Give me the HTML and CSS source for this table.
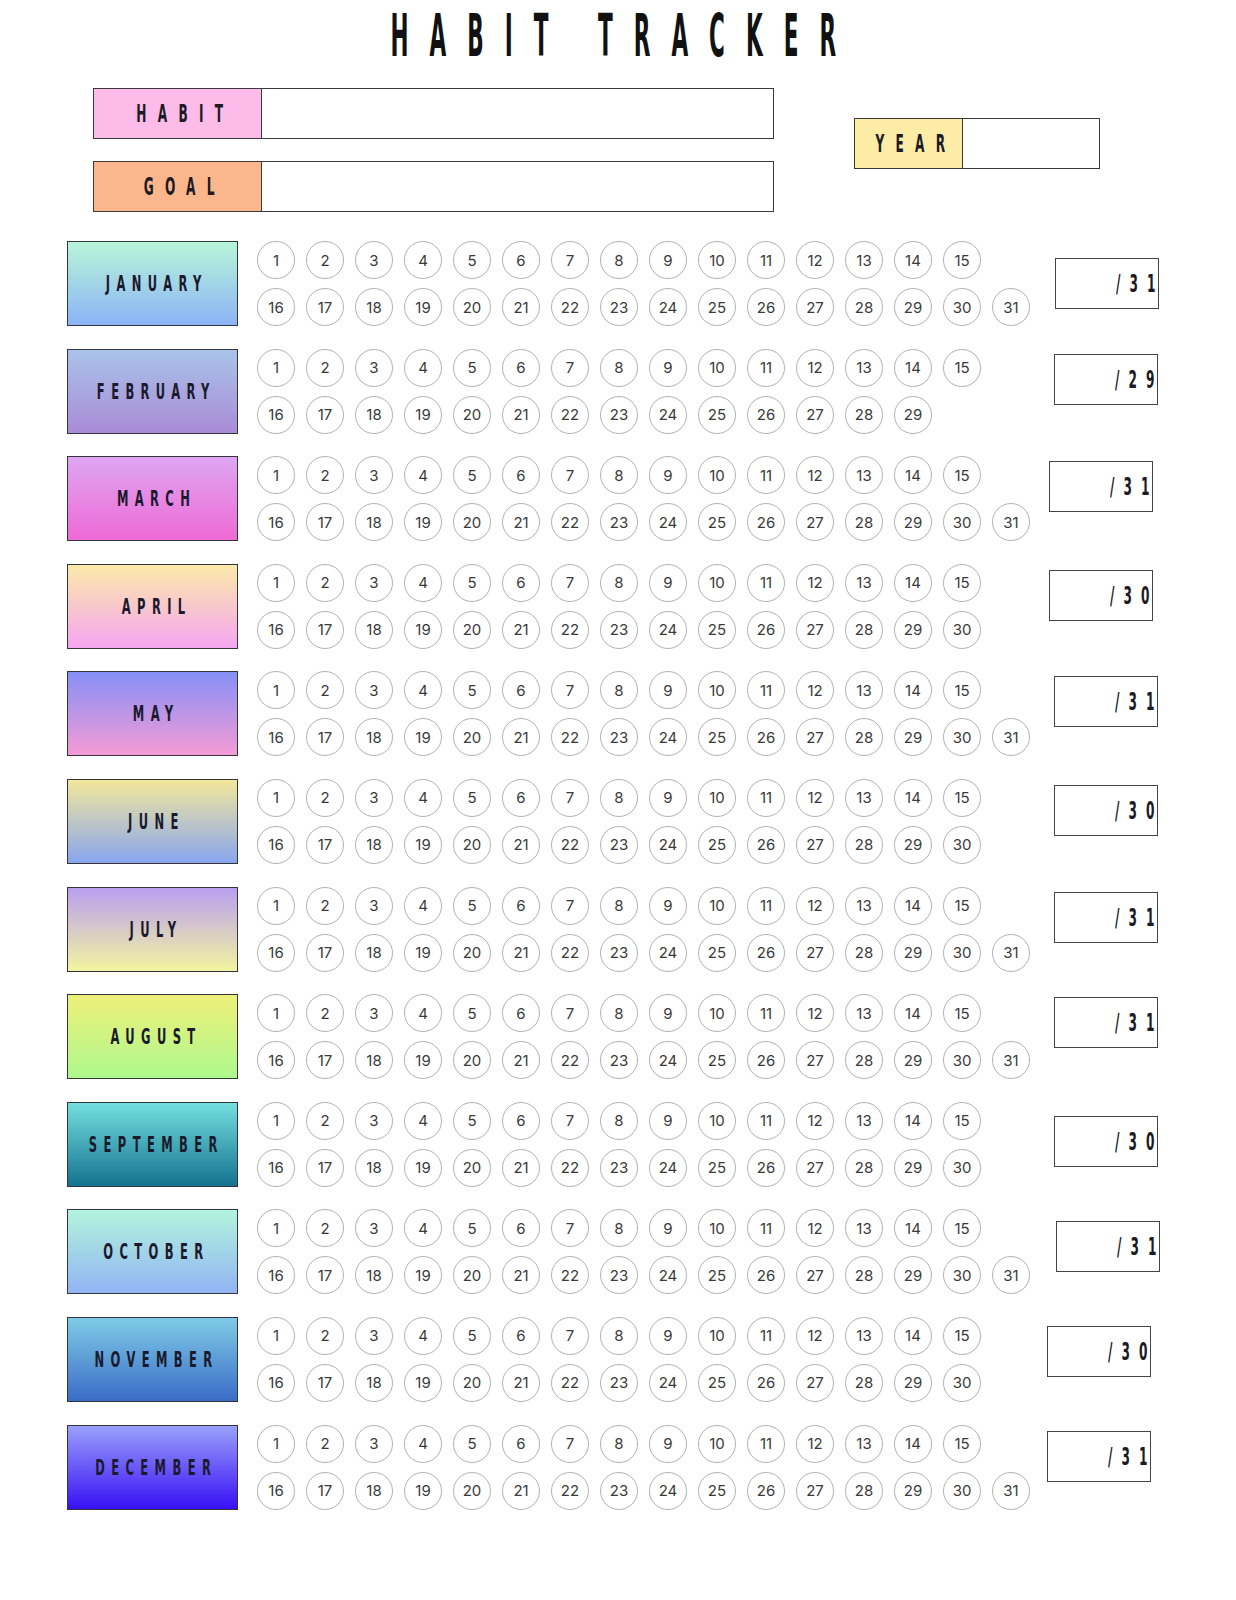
FILE: index.html
```html
<!DOCTYPE html>
<html lang="en">
<head>
<meta charset="utf-8">
<title>Habit Tracker</title>
<link rel="stylesheet" href="styles.css">
</head>
<body>
<div class="page">
  <h1 class="title"><span class="cond">HABIT TRACKER</span></h1>

  <div class="top">
    <div class="fields">
      <div class="field">
        <div class="field-label habit"><span class="cond lbl">HABIT</span></div>
        <div class="field-input"></div>
      </div>
      <div class="field">
        <div class="field-label goal"><span class="cond lbl">GOAL</span></div>
        <div class="field-input"></div>
      </div>
    </div>
    <div class="field year">
      <div class="field-label yearlbl"><span class="cond lbl">YEAR</span></div>
      <div class="field-input"></div>
    </div>
  </div>

  <div class="months" id="months"></div>
</div>
<script src="script.js"></script>
</body>
</html>
```

FILE: script.js
```js
(function () {
  var months = [
    ["JANUARY", 31, "jan"], ["FEBRUARY", 29, "feb"], ["MARCH", 31, "mar"],
    ["APRIL", 30, "apr"], ["MAY", 31, "may"], ["JUNE", 30, "jun"],
    ["JULY", 31, "jul"], ["AUGUST", 31, "aug"], ["SEPTEMBER", 30, "sep"],
    ["OCTOBER", 31, "oct"], ["NOVEMBER", 30, "nov"], ["DECEMBER", 31, "dec"]
  ];
  var root = document.getElementById("months");
  months.forEach(function (m) {
    var row = document.createElement("div");
    row.className = "month " + m[2];
    var html = '<div class="mlabel"><span class="cond mtxt">' + m[0] + '</span></div>';
    html += '<div class="days"><div class="drow">';
    for (var d = 1; d <= 15; d++) html += '<span class="day">' + d + '</span>';
    html += '</div><div class="drow">';
    for (var d2 = 16; d2 <= m[1]; d2++) html += '<span class="day">' + d2 + '</span>';
    html += '</div></div>';
    html += '<div class="score"><span class="cond stxt">/' + m[1] + '</span></div>';
    row.innerHTML = html;
    root.appendChild(row);
  });
})();
```

FILE: styles.css
```css
* { box-sizing: border-box; }

body {
  margin: 0;
  background: #ffffff;
  font-family: Inter, "Liberation Sans", sans-serif;
  color: #222;
}

.page {
  width: 1236px;
  padding: 0 0 60px 67px;
}

.cond {
  display: inline-block;
  font-family: "Liberation Sans Narrow", "DejaVu Sans Condensed", "Liberation Sans", sans-serif;
  font-stretch: condensed;
  transform-origin: center center;
  white-space: pre;
}

/* Title */
.title {
  margin: 0 0 0 -67px;
  padding-top: 16px;
  height: 88px;
  text-align: center;
  font-weight: normal;
}
.title .cond {
  font-size: 40px;
  line-height: 40px;
  font-weight: 700;
  letter-spacing: 35px;
  margin-right: -12px;
  color: #111;
  transform: scale(0.6, 1.45);
}

/* Top fields */
.top {
  display: flex;
  align-items: flex-start;
}
.fields {
  margin-left: 26px;
  display: flex;
  flex-direction: column;
  gap: 22px;
}
.field {
  display: flex;
  height: 51px;
  border: 1.5px solid #3a3a3a;
}
.fields .field { width: 681px; }
.field-label {
  width: 168px;
  border-right: 1.5px solid #3a3a3a;
  display: flex;
  align-items: center;
  justify-content: center;
}
.field-input { flex: 1; background: #fff; }
.habit { background: #fcbbe8; }
.goal { background: #fbb68b; }
.year {
  width: 246px;
  margin-left: 80px;
  margin-top: 30px;
}
.yearlbl {
  width: 108px;
  background: #fdeca5;
}
.lbl {
  font-size: 18px;
  font-weight: 700;
  letter-spacing: 15px;
  margin-right: -15px;
  color: #1c1a24;
  transform: scale(0.75, 1.38);
}

/* Months */
.months {
  margin-top: 29px;
  display: flex;
  flex-direction: column;
  gap: 22.6px;
}
.month {
  display: flex;
  align-items: flex-start;
  height: 85px;
}
.mlabel {
  flex: none;
  width: 171px;
  height: 85px;
  border: 1.5px solid #34343c;
  display: flex;
  align-items: center;
  justify-content: center;
}
.mtxt {
  font-size: 16px;
  font-weight: 700;
  letter-spacing: 8px;
  margin-right: -8px;
  color: #1a1a2c;
  transform: scale(0.8, 1.3);
}
.days {
  flex: none;
  width: 773px;
  margin-left: 19px;
  display: flex;
  flex-direction: column;
  gap: 9px;
}
.drow {
  display: flex;
  gap: 11px;
}
.day {
  width: 38px;
  height: 38px;
  border: 1px solid #b3b3b3;
  border-radius: 50%;
  display: flex;
  align-items: center;
  justify-content: center;
  font-size: 15px;
  color: #3a3a3a;
  box-shadow: 0 0 1px rgba(0,0,0,0.08);
}
.score {
  flex: none;
  width: 104px;
  height: 51px;
  margin-left: 25px;
  border: 1.5px solid #444;
  display: flex;
  align-items: center;
  justify-content: flex-end;
  padding-right: 6px;
}
.stxt {
  font-size: 18px;
  font-weight: 700;
  letter-spacing: 12px;
  margin-right: -12px;
  color: #1c1a24;
  transform: scale(0.75, 1.38);
  transform-origin: right center;
}

/* Per-month gradients and score box placement */
.jan .mlabel { background: linear-gradient(#b8f5d8, #8cb4f7); }
.feb .mlabel { background: linear-gradient(#a9c3ea, #a98bd6); }
.mar .mlabel { background: linear-gradient(#dea6f2, #ef6ad6); }
.apr .mlabel { background: linear-gradient(#fbe9a8, #f5a6f2); }
.may .mlabel { background: linear-gradient(#8590f7, #f59bd5); }
.jun .mlabel { background: linear-gradient(#f3e79b, #88a6ee); }
.jul .mlabel { background: linear-gradient(#b99ff0, #f3f4a0); }
.aug .mlabel { background: linear-gradient(#eef078, #aef88e); }
.sep .mlabel { background: linear-gradient(#74dfdf, #14728f); }
.oct .mlabel { background: linear-gradient(#b2f4dc, #92b4f4); }
.nov .mlabel { background: linear-gradient(#7fcbe6, #3a6cc7); }
.dec .mlabel { background: linear-gradient(#9aa0fa, #3810f5); }

.jan .score { margin-top: 17px; margin-left: 25px; }
.feb .score { margin-top: 5px;  margin-left: 24px; }
.mar .score { margin-top: 5px;  margin-left: 19px; }
.apr .score { margin-top: 6px;  margin-left: 19px; }
.may .score { margin-top: 5px;  margin-left: 24px; }
.jun .score { margin-top: 6px;  margin-left: 24px; }
.jul .score { margin-top: 5px;  margin-left: 24px; }
.aug .score { margin-top: 3px;  margin-left: 24px; }
.sep .score { margin-top: 14px; margin-left: 24px; }
.oct .score { margin-top: 12px; margin-left: 26px; }
.nov .score { margin-top: 9px;  margin-left: 17px; }
.dec .score { margin-top: 6px;  margin-left: 17px; }
```
